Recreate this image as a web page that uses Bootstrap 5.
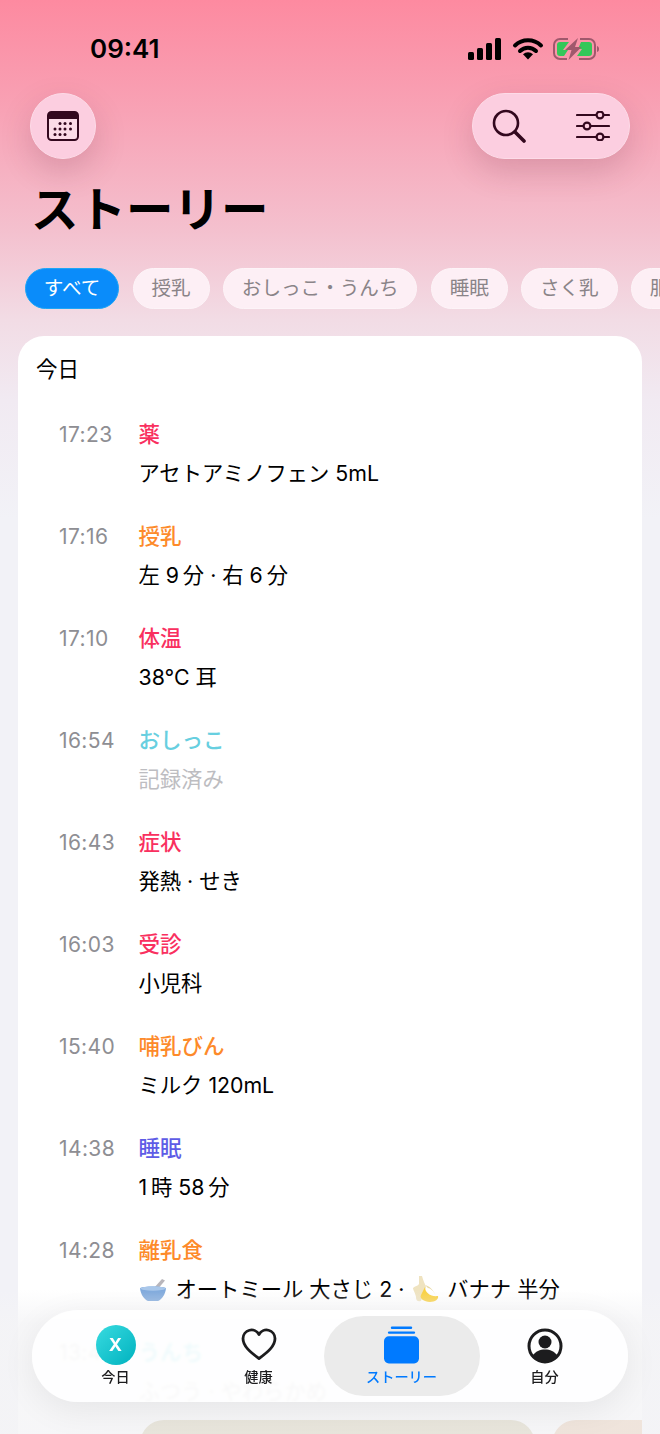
<!DOCTYPE html>
<html lang="ja">
<head>
    <meta charset="UTF-8">
    <meta name="viewport" content="width=device-width, initial-scale=1.0">
    <title>ストーリー</title>
    <link href="https://cdn.jsdelivr.net/npm/bootstrap@5.3.0/dist/css/bootstrap.min.css" rel="stylesheet">
    <style>
        html, body { height: 1434px; overflow: hidden; }
        body {
            font-family: Inter, "Noto Sans CJK JP", sans-serif;
            background: linear-gradient(180deg, #fd8aa0 0, #f8a2b5 110px, #f4c0ce 230px, #f2dce5 320px, #f1eaf2 400px, #f2f2f7 520px);
            color: #000;
        }
        .page-frame { height: 1434px; }
        .status-row { height: 93px; padding: 29px 61px 24px 90px; }
        .clock { font-size: 26px; line-height: 40px; font-weight: 600; }
        .head-row { height: 66px; padding: 0 30px; }
        .glass-btn {
            height: 66px; background: #fcceE0; border: 1px solid #fddbe8;
            box-shadow: 0 12px 32px rgba(90, 30, 50, .18);
        }
        .glass-round { width: 66px; }
        .glass-pill { width: 158px; padding: 0 19px; border-radius: 33px; }
        .page-title { font-size: 47.500px; line-height: 60px; font-weight: 700; margin: 21px 0 0 31px; }
        .chip-row { margin: 28px 0 0 25px; gap: 13.500px; width: 635px; overflow: hidden; }
        .chip-item {
            height: 41px; line-height: 39px; padding: 0 17.800px; font-size: 19.600px; color: #8a8488;
            background: #fdeff5; border: 1px solid #fdf4f8; border-radius: 20.500px; white-space: nowrap;
        }
        .chip-on { background: #0a8cfa; border-color: #1fa6f5; color: #fff; }
        .sheet { margin: 27px 18px 0; border-radius: 26px 26px 0 0; height: 1100px; }
        .sheet-head { font-size: 21.500px; line-height: 33px; padding: 17px 0 29px 18px; }
        .entry { height: 102px; padding-left: 41px; }
        .entry-last { height: 87px; position: relative; z-index: 1; overflow: hidden; }
        .entry-time { width: 79.500px; font-size: 21px; line-height: 39px; color: #8e8e93; letter-spacing: .4px; }
        .entry-title { font-size: 21.500px; line-height: 39px; font-weight: 500; }
        .entry-text { font-size: 21.300px; line-height: 39px; white-space: nowrap; }
        .c-red { color: #f9305f; }
        .c-orange { color: #fd8a2a; }
        .c-cyan { color: #67cfe0; }
        .c-violet { color: #5e5ce6; }
        .c-muted { color: #bdbdc1; }
        .thumb-row { margin: 0 0 0 122px; gap: 17px; width: 700px; }
        .thumb-box { height: 60px; border-radius: 24px 24px 0 0; background: #b9aa73; }
        .thumb-a { width: 395px; }
        .thumb-b { width: 200px; background: #dca573; }
        .bowl-ico { margin-right: 9px; }
        .banana-ico { margin: 0 8px 0 1px; }
        .fog-layer {
            position: absolute; left: 0; right: 0; top: 1290px; bottom: 0;
            background: linear-gradient(180deg, rgba(248, 248, 250, 0), rgba(244, 244, 246, .8) 34px);
        }
        .tabbar {
            position: absolute; z-index: 2; left: 32px; top: 1310px; width: 596px; height: 92px; padding: 6px 0;
            background: rgba(255, 255, 255, .88); border-radius: 46px;
            backdrop-filter: blur(1.500px);
            box-shadow: 0 8px 34px rgba(0, 0, 0, .07);
        }
        .tab-slot { width: 143px; height: 80px; font-size: 14.200px; font-weight: 500; line-height: 18px; color: #1c1c1e; }
        .tab-on { width: 156px; border-radius: 40px; background: #ebebeb; color: #007aff; margin: 0 -6.500px; }
        .tab-ico { height: 52px; padding-top: 10px; }
        .tab-ico-face { padding-top: 12px; }
        .avatar-x {
            width: 40px; height: 40px; margin-top: 9px; margin-bottom: 3px; color: #fff; font-size: 18px; font-weight: 700;
            background: linear-gradient(135deg, #38dbe0, #00b2bf);
        }
    </style>
</head>
<body class="position-relative">
    <div class="page-frame">
        <div class="status-row d-flex justify-content-between align-items-center">
            <span class="clock">09:41</span>
            <div class="d-flex align-items-center">
                <svg width="131" height="22" viewBox="0 0 131 22">
                    <rect x="0" y="14" width="6" height="8" rx="1.500" fill="#000"/>
                    <rect x="9" y="10" width="6" height="12" rx="1.500" fill="#000"/>
                    <rect x="18" y="5" width="6" height="17" rx="1.500" fill="#000"/>
                    <rect x="27" y="0" width="6" height="22" rx="1.500" fill="#000"/>
                    <path d="M47 7.500a19 19 0 0 1 26 0" fill="none" stroke="#000" stroke-width="4" stroke-linecap="round"/>
                    <path d="M52 13a11.500 11.500 0 0 1 16 0" fill="none" stroke="#000" stroke-width="4" stroke-linecap="round"/>
                    <path d="M55 16.200a7.500 7.500 0 0 1 10 0L60 21.500z" fill="#000"/>
                    <path d="M100 1H92a6 6 0 0 0-6 6v8a6 6 0 0 0 6 6h7M112 1h9a6 6 0 0 1 6 6v8a6 6 0 0 1-6 6h-10" fill="none" stroke="#a0586c" stroke-width="2"/>
                    <path d="M101 4H92a3 3 0 0 0-3 3v8a3 3 0 0 0 3 3h4l4-6h-5zM113 4h8a3 3 0 0 1 3 3v8a3 3 0 0 1-3 3h-12l5-7h-4z" fill="#34c759"/>
                    <path d="M129 8v6c1.500-.5 2-1.500 2-3s-.5-2.500-2-3z" fill="#a0586c"/>
                    <path d="M110 0L97 12h6.500l-3 10 13-13h-6.500z" fill="#a0586c"/>
                </svg>
            </div>
        </div>

        <div class="head-row d-flex justify-content-between">
            <div class="glass-btn glass-round rounded-circle d-flex align-items-center justify-content-center">
                <svg width="32" height="30" viewBox="0 0 32 30">
                    <rect x="1" y="1" width="30" height="28" rx="3.500" fill="#fbdbe7" stroke="#33081e" stroke-width="2"/>
                    <path d="M1 8V4.500A3.500 3.500 0 0 1 4.500 1h23A3.500 3.500 0 0 1 31 4.500V8z" fill="#33081e"/>
                    <g fill="#33081e">
                        <circle cx="13" cy="12.500" r="1.500"/><circle cx="18" cy="12.500" r="1.500"/><circle cx="23.500" cy="12.500" r="1.500"/>
                        <circle cx="8" cy="18" r="1.500"/><circle cx="13" cy="18" r="1.500"/><circle cx="18" cy="18" r="1.500"/><circle cx="23.500" cy="18" r="1.500"/>
                        <circle cx="8" cy="23.500" r="1.500"/><circle cx="13" cy="23.500" r="1.500"/><circle cx="18" cy="23.500" r="1.500"/>
                    </g>
                </svg>
            </div>
            <div class="glass-btn glass-pill d-flex align-items-center justify-content-between">
                <svg width="34" height="34" viewBox="0 0 34 34" fill="none" stroke="#33081e" stroke-linecap="round">
                    <circle cx="14" cy="14" r="12" stroke-width="2.600"/>
                    <path d="M23 23l9 9" stroke-width="3.600"/>
                </svg>
                <svg width="34" height="30" viewBox="0 0 34 30" fill="none" stroke="#33081e" stroke-width="2.200" stroke-linecap="round">
                    <path d="M1 4h19M28 4h5M1 15h6M15 15h18M1 26h19M28 26h5"/>
                    <circle cx="24" cy="4" r="3.400"/><circle cx="11" cy="15" r="3.400"/><circle cx="24" cy="26" r="3.400"/>
                </svg>
            </div>
        </div>

        <h1 class="page-title">ストーリー</h1>

        <div class="chip-row d-flex">
            <span class="chip-item chip-on">すべて</span>
            <span class="chip-item">授乳</span>
            <span class="chip-item">おしっこ・うんち</span>
            <span class="chip-item">睡眠</span>
            <span class="chip-item">さく乳</span>
            <span class="chip-item">服薬</span>
        </div>

        <div class="sheet bg-white overflow-hidden">
            <div class="sheet-head">今日</div>

            <div class="entry d-flex">
                <div class="entry-time">17:23</div>
                <div><div class="entry-title c-red">薬</div><div class="entry-text">アセトアミノフェン 5mL</div></div>
            </div>
            <div class="entry d-flex">
                <div class="entry-time">17:16</div>
                <div><div class="entry-title c-orange">授乳</div><div class="entry-text">左 9&thinsp;分 · 右 6&thinsp;分</div></div>
            </div>
            <div class="entry d-flex">
                <div class="entry-time">17:10</div>
                <div><div class="entry-title c-red">体温</div><div class="entry-text">38°C 耳</div></div>
            </div>
            <div class="entry d-flex">
                <div class="entry-time">16:54</div>
                <div><div class="entry-title c-cyan">おしっこ</div><div class="entry-text c-muted">記録済み</div></div>
            </div>
            <div class="entry d-flex">
                <div class="entry-time">16:43</div>
                <div><div class="entry-title c-red">症状</div><div class="entry-text">発熱 · せき</div></div>
            </div>
            <div class="entry d-flex">
                <div class="entry-time">16:03</div>
                <div><div class="entry-title c-red">受診</div><div class="entry-text">小児科</div></div>
            </div>
            <div class="entry d-flex">
                <div class="entry-time">15:40</div>
                <div><div class="entry-title c-orange">哺乳びん</div><div class="entry-text">ミルク 120mL</div></div>
            </div>
            <div class="entry d-flex">
                <div class="entry-time">14:38</div>
                <div><div class="entry-title c-violet">睡眠</div><div class="entry-text">1&thinsp;時 58&thinsp;分</div></div>
            </div>
            <div class="entry d-flex">
                <div class="entry-time">14:28</div>
                <div>
                    <div class="entry-title c-orange">離乳食</div>
                    <div class="entry-text d-flex align-items-center">
                        <svg class="bowl-ico" width="28" height="24" viewBox="0 0 28 24">
                            <path d="M14 11L23 1l3 1.500L18 12z" fill="#b9b6bb"/>
                            <path d="M1 10c4-2 22-2 26 0-.5 7-5 12-8 13h-10C6 22 1.500 17 1 10z" fill="#7fa9dc"/>
                            <ellipse cx="14" cy="10.500" rx="12.500" ry="2.200" fill="#a9c7ea"/>
                        </svg>
                        <span>オートミール 大さじ 2 ·</span>
                        <svg class="banana-ico ms-2" width="27" height="28" viewBox="0 0 27 28">
                            <path d="M7 0h3c1 4 3 8 4 11l-5 14C6 26 4 25 4 21c-1-5-3-7-3-9 2-2 5-2 6-4z" fill="#efe3c0"/>
                            <path d="M13 9c4 1 8 4 11 11-2-5-6-8-8-8z" fill="#e8d9a6"/>
                            <path d="M13 11c0 6 6 10 13 9 1 3-3 6-8 6-6 0-11-4-9-7z" fill="#fad13f"/>
                        </svg>
                        <span>バナナ 半分</span>
                    </div>
                </div>
            </div>
            <div class="entry entry-last d-flex">
                <div class="entry-time c-muted">13:42</div>
                <div><div class="entry-title c-cyan">うんち</div><div class="entry-text c-muted">ふつう · やわらかめ</div></div>
            </div>
            <div class="thumb-row d-flex">
                <div class="thumb-box thumb-a"></div>
                <div class="thumb-box thumb-b"></div>
            </div>
        </div>
    </div>

    <div class="fog-layer"></div>

    <nav class="tabbar d-flex justify-content-center">
        <div class="tab-slot d-flex flex-column align-items-center">
            <div class="avatar-x rounded-circle d-flex align-items-center justify-content-center">X</div>
            <div>今日</div>
        </div>
        <div class="tab-slot d-flex flex-column align-items-center">
            <div class="tab-ico tab-ico-face">
                <svg width="36" height="32" viewBox="0 0 36 32" class="d-block"><path d="M18 30.500C9 24 2 18 2 10.500a8.500 8.500 0 0 1 16-4 8.500 8.500 0 0 1 16 4C34 18 27 24 18 30.500z" fill="none" stroke="#1c1c1e" stroke-width="2.800" stroke-linejoin="round"/></svg>
            </div>
            <div>健康</div>
        </div>
        <div class="tab-slot tab-on d-flex flex-column align-items-center">
            <div class="tab-ico">
                <svg width="35" height="38" viewBox="0 0 36 38" class="d-block">
                    <rect x="7" y="0" width="22" height="2.500" rx="1.200" fill="#007aff"/>
                    <rect x="4" y="5" width="28" height="2.500" rx="1.200" fill="#007aff"/>
                    <rect x="0" y="10" width="36" height="28" rx="5" fill="#007aff"/>
                </svg>
            </div>
            <div>ストーリー</div>
        </div>
        <div class="tab-slot d-flex flex-column align-items-center">
            <div class="tab-ico tab-ico-face">
                <svg width="36" height="36" viewBox="0 0 36 36" class="d-block">
                    <circle cx="18" cy="18" r="16" fill="#fff" stroke="#1c1c1e" stroke-width="3"/>
                    <circle cx="18" cy="14" r="6.500" fill="#1c1c1e"/>
                    <path d="M5.500 28c3-5 7.500-6.500 12.500-6.500S27.500 23 30.500 28C27 32 23 34 18 34S9 32 5.500 28z" fill="#1c1c1e"/>
                </svg>
            </div>
            <div>自分</div>
        </div>
    </nav>

    <script src="https://cdn.jsdelivr.net/npm/bootstrap@5.3.0/dist/js/bootstrap.bundle.min.js"></script>
</body>
</html>
